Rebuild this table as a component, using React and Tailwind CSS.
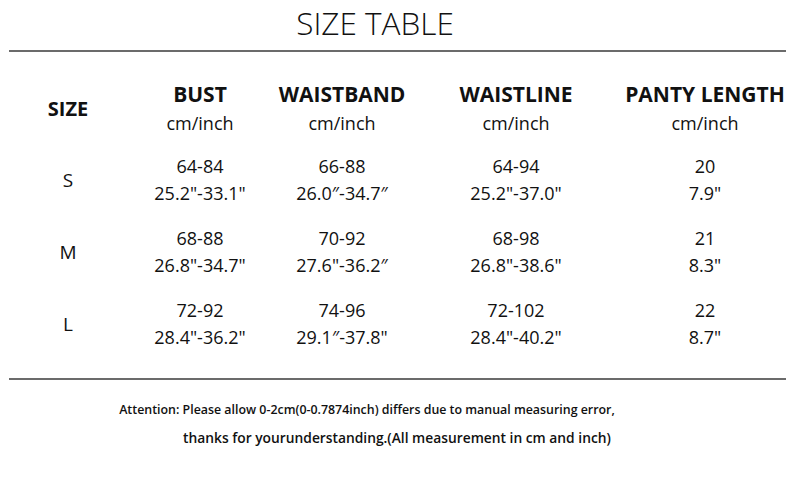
import React from "react";

const columns = [
  { title: "BUST", w: "w-[146px]" },
  { title: "WAISTBAND", w: "w-[138px]" },
  { title: "WAISTLINE", w: "w-[210px]" },
  { title: "PANTY LENGTH", w: "w-[168px]" },
];

const rows = [
  {
    size: "S",
    cells: [
      ["64-84", "25.2\"-33.1\""],
      ["66-88", "26.0″-34.7″"],
      ["64-94", "25.2\"-37.0\""],
      ["20", "7.9\""],
    ],
  },
  {
    size: "M",
    cells: [
      ["68-88", "26.8\"-34.7\""],
      ["70-92", "27.6\"-36.2″"],
      ["68-98", "26.8\"-38.6\""],
      ["21", "8.3\""],
    ],
  },
  {
    size: "L",
    cells: [
      ["72-92", "28.4\"-36.2\""],
      ["74-96", "29.1″-37.8\""],
      ["72-102", "28.4\"-40.2\""],
      ["22", "8.7\""],
    ],
  },
];

export default function App() {
  return (
    <div
      className="w-[800px] h-[501px] bg-white text-[#111] flex flex-col"
      style={{ fontFamily: '"Open Sans", "Noto Sans", sans-serif' }}
    >
      {/* Title */}
      <div className="h-[50px] flex items-center justify-center pr-[50px]">
        <h1 className="text-[31.5px] font-light leading-none mt-[-5px]">
          SIZE TABLE
        </h1>
      </div>
      <div className="h-[2px] ml-[9px] mr-[14px] bg-[#6b6b6b]" />

      {/* Table */}
      <div className="mx-[9px]">
        {/* Header */}
        <div className="flex pt-[28px]">
          <div className="w-[118px] flex items-center justify-center text-[20px] font-bold">
            SIZE
          </div>
          {columns.map((c) => (
            <div key={c.title} className={`${c.w} flex flex-col items-center`}>
              <span className="text-[21px] font-bold leading-[29px]">{c.title}</span>
              <span className="text-[18px] leading-[29px]">cm/inch</span>
            </div>
          ))}
        </div>

        {/* Rows */}
        {rows.map((r) => (
          <div key={r.size} className="flex h-[72px] pt-[15px]">
            <div className="w-[118px] h-[54px] flex items-center justify-center text-[19px]">
              {r.size}
            </div>
            {r.cells.map((cell, i) => (
              <div
                key={i}
                className={`${columns[i].w} flex flex-col items-center text-[18px] leading-[27px]`}
              >
                <span>{cell[0]}</span>
                <span>{cell[1]}</span>
              </div>
            ))}
          </div>
        ))}
      </div>

      <div className="h-[2px] ml-[9px] mr-[14px] mt-[24px] bg-[#6b6b6b]" />

      {/* Footer note */}
      <div className="pt-[16px] flex flex-col items-center font-semibold leading-[28px] pr-[66px]">
        <p className="text-[12.4px]">
          Attention: Please allow 0-2cm(0-0.7874inch) differs due to manual measuring error,
        </p>
        <p className="pl-[60px] text-[13.8px]">
          thanks for yourunderstanding.(All measurement in cm and inch)
        </p>
      </div>
    </div>
  );
}
